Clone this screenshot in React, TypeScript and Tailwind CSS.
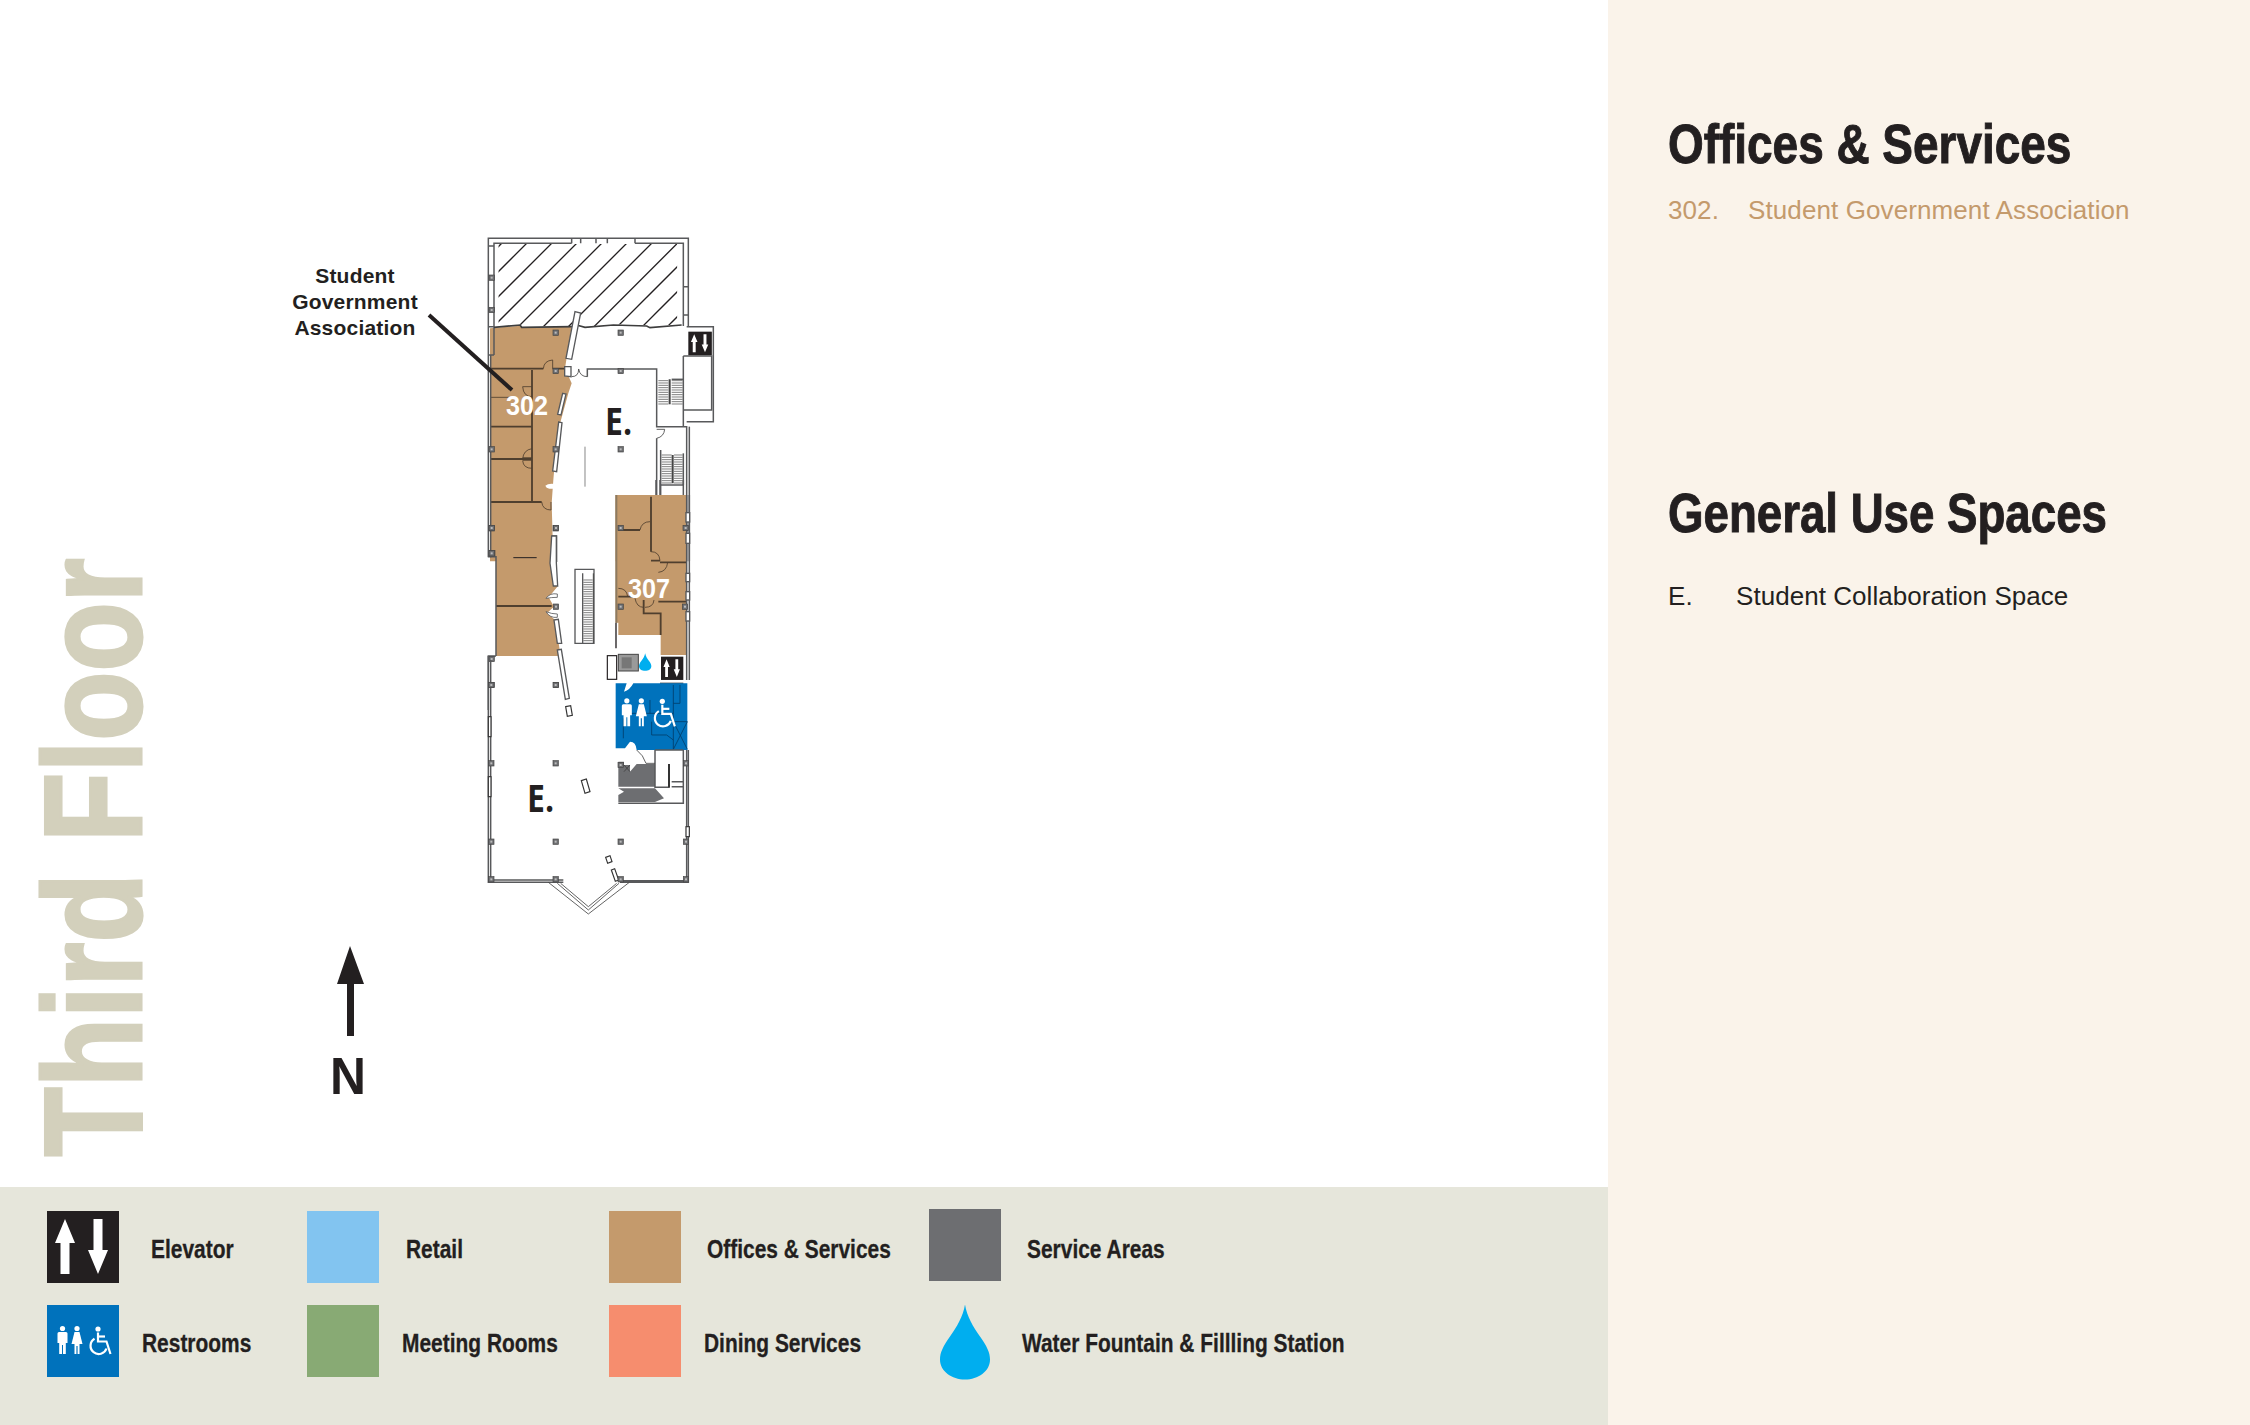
const wall = "#58595b";
const inner = "#4f3f2e";
const tan = "#c49a6c";

function ElevatorGlyph() {
  return (
    <g>
      <rect width="72" height="72" fill="#231f20" />
      <path d="M18 8 L28 32 H22.5 V63 H13.5 V32 H8 Z" fill="#fff" />
      <path d="M46.5 8 H55.5 V39 H61 L51 63 L41 39 H46.5 Z" fill="#fff" />
    </g>
  );
}

function RestroomGlyph() {
  return (
    <g fill="#fff">
      <circle cx="15.5" cy="23.5" r="2.6" />
      <path d="M12 27 H19 Q20.5 27 20.5 28.5 V38 H18.8 V49 H16 V40 H15 V49 H12.2 V38 H10.5 V28.5 Q10.5 27 12 27 Z" />
      <circle cx="30" cy="23.5" r="2.6" />
      <path d="M27.5 27 H32.5 L35.5 39 H32.5 V49 H30.6 V41 H29.4 V49 H27.5 V39 H24.5 Z" />
      <circle cx="51" cy="24" r="2.6" />
      <g fill="none" stroke="#fff" strokeWidth="2.2">
        <path d="M51 27.5 V36.5 H59.5 L63.5 49" />
        <path d="M51 31.5 H58" />
        <path d="M47.5 33.8 A8.2 8.2 0 1 0 59.5 43.5" />
      </g>
    </g>
  );
}

const DROP =
  "M25 0 C27 12 33 22 40 32 C47 42 50 48 50 55 C50 67 38 75 25 75 C12 75 0 67 0 55 C0 48 3 42 10 32 C17 22 23 12 25 0 Z";

function Columns({ at }: { at: number[][] }) {
  return (
    <g>
      {at.map(([x, y]) => (
        <g key={`${x}-${y}`}>
          <rect x={x - 8} y={y - 8} width="16" height="16" fill="#6d6e71" stroke="#444" strokeWidth="2" />
          <rect x={x - 3} y={y - 3} width="6" height="6" fill="#bbb" />
        </g>
      ))}
    </g>
  );
}

function Treads({ x1, x2, y1, y2 }: { x1: number; x2: number; y1: number; y2: number }) {
  const rows: number[] = [];
  for (let y = y1; y <= y2; y += 7) rows.push(y);
  return (
    <g stroke="#666" strokeWidth="2.5">
      {rows.map((y) => (
        <line key={y} x1={x1} x2={x2} y1={y} y2={y} />
      ))}
    </g>
  );
}

const hatch = [765, 840, 915, 990, 1065, 1140, 1215, 1292, 1362, 1437, 1512];

function FloorPlan() {
  return (
    <svg viewBox="280 230 480 890" className="block w-[480px] h-[890px] mt-[230px] shrink-0">
      {/* upper half, coordinates x3 from (270,220) */}
      <g transform="translate(270 220) scale(0.33333)">
        <clipPath id="hatch-area">
          <path d="M685 72 H1222 V313 L1140 320 L1130 316 L1030 313 L950 320 L920 313 L905 318 L755 320 L750 313 L685 320 Z" />
        </clipPath>
        <g clipPath="url(#hatch-area)" stroke="#231f20" strokeWidth="4">
          {hatch.map((c) => (
            <line key={c} x1={c - 60} y1="60" x2={c - 340} y2="340" />
          ))}
        </g>

        <path
          d="M660 325 L750 317 L755 323 L905 320 L885 445 L905 490 L895 520 L862 640 L850 780 L845 850 L850 1024 H660 Z"
          fill={tan}
        />
        <path d="M1037 825 H1248 V1024 H1037 Z" fill={tan} />

        {/* interior walls */}
        <g fill="none" stroke={inner} strokeWidth="5.5">
          <path d="M660 446 H820 M848 446 H885" />
          <path d="M786 450 V845 M660 620 H786 M660 717 H786 M660 846 H815" />
          <path d="M1143 825 V905 M1143 935 V1024 M1050 930 H1113" />
        </g>
        <g fill="none" stroke={inner} strokeWidth="2.5">
          <path d="M660 532 H722" />
          <path d="M820 446 Q822 422 848 420 V446" />
          <path d="M786 530 Q760 530 758 500 H786" />
          <path d="M786 686 Q760 690 758 717 M786 745 Q760 745 758 722" />
          <path d="M815 846 Q818 870 843 870 V846" />
          <path d="M1113 930 Q1118 905 1140 905" />
          <path d="M1143 995 Q1165 1000 1170 1024" />
        </g>
        <path d="M758 712 H786 V722 H758 Z" fill="#4f3f2e" />

        {/* shell */}
        <g fill="none" stroke={wall} strokeWidth="4.5">
          <path d="M655 1012 V55 H1255 V320" />
          <path d="M672 405 V70 H905 M1095 70 H1240 V318" />
          <path d="M662 1012 V405" />
          <path d="M905 70 V55 M932 70 V55 M978 70 V55 M1012 70 V55 M1095 70 V55" />
          <path d="M655 405 H672 M655 320 H672 M655 78 H672 M1240 200 H1255 M1240 285 H1255" />
        </g>
        <path d="M672 322 L750 315 L755 322 L905 320 L920 315 L945 322 L1030 315 L1130 318 L1140 323 L1235 315" fill="none" stroke="#3d3d3d" strokeWidth="5" />

        {/* slanted windows along the spine */}
        <g fill="#fff" stroke={wall} strokeWidth="4">
          <path d="M915 275 L932 279 L905 418 L888 415 Z" />
          <path d="M884 440 H903 V470 L884 468 Z" />
          <path d="M878 520 L888 522 L873 585 L863 583 Z" />
          <path d="M866 606 L876 608 L860 755 L848 753 Z" />
          <path d="M848 948 H860 V1024 H848 Z" />
        </g>
        <path d="M826 797 Q835 789 855 792 V806 H838 Q828 804 826 797 Z" fill="#fff" />

        {/* corridor and core */}
        <g fill="none" stroke={wall} strokeWidth="4.5">
          <path d="M952 470 V447 H1160 V620 H1250 V1024" />
          <path d="M1160 655 V825 M1172 690 V825" />
          <path d="M1250 320 H1330 V605 H1250" />
          <path d="M1240 408 H1325 V570 H1240 M1240 408 V620" />
          <path d="M1205 478 H1240" />
          <path d="M1258 620 V1024" />
          <path d="M1240 700 V795" />
          <path d="M1172 795 H1240" />
        </g>
        <path d="M945 680 V800" stroke="#888" strokeWidth="3" />
        <g fill="none" stroke="#444" strokeWidth="2.5">
          <path d="M905 470 Q926 470 926 447 Q930 470 952 470" />
          <path d="M1160 628 H1184 Q1182 650 1160 655" />
        </g>
        <Treads x1={1165} x2={1195} y1={482} y2={555} />
        <Treads x1={1205} x2={1238} y1={482} y2={555} />
        <Treads x1={1175} x2={1205} y1={705} y2={790} />
        <Treads x1={1212} x2={1238} y1={705} y2={790} />
        <path d="M1199 478 V553 M1208 705 V790" stroke="#444" strokeWidth="6" />

        <g transform="translate(1255 335) scale(0.98)">
          <ElevatorGlyph />
        </g>
        <Columns
          at={[
            [857, 338],
            [1052, 338],
            [857, 453],
            [1052, 453],
            [1052, 688],
            [857, 688],
            [665, 688],
            [665, 925],
            [857, 925],
            [1052, 925],
            [1245, 925],
            [665, 173],
            [665, 270],
            [667, 1000],
          ]}
        />
      </g>

      {/* middle, coordinates x3 from (470,480) */}
      <g transform="translate(470 480) scale(0.33333)">
        <path d="M78 230 H240 L262 320 L236 352 L252 380 L232 398 L255 420 L272 528 H78 Z" fill={tan} />
        <path d="M437 45 H648 V525 H572 V465 H445 V428 H437 Z" fill={tan} />
        <path d="M439 45 V428" stroke="#8d7a60" strokeWidth="6" />

        <g fill="none" stroke={inner} strokeWidth="5.5">
          <path d="M78 378 H245" />
          <path d="M445 150 H510 M543 50 V215 M543 242 H570 M570 247 H648 M565 365 H648" />
          <path d="M445 350 H495 M521 360 V400 H572 V465" />
        </g>
        <path d="M130 233 H200" stroke="#231f20" strokeWidth="3" />
        <g fill="none" stroke={inner} strokeWidth="2.5">
          <path d="M510 150 Q515 125 540 125" />
          <path d="M543 215 Q568 215 570 242" />
          <path d="M593 247 Q590 275 565 277" />
          <path d="M445 325 Q470 325 473 350" />
          <path d="M495 355 Q500 382 521 382 M525 382 Q550 382 552 360" />
        </g>

        {/* walls */}
        <g fill="none" stroke={wall} strokeWidth="4.5">
          <path d="M55 230 H78 V528" />
          <path d="M78 528 H55 V690" />
          <path d="M650 45 V600 M658 45 V600" />
          <path d="M558 0 V45 M570 0 V45 M640 0 V45" />
          <path d="M570 610 H640" />
        </g>
        <g fill="#fff" stroke={wall} strokeWidth="4">
          <rect x="648" y="98" width="11" height="28" />
          <rect x="648" y="160" width="11" height="30" />
          <rect x="648" y="280" width="11" height="25" />
          <rect x="648" y="335" width="11" height="25" />
          <rect x="648" y="395" width="11" height="28" />
          <path d="M245 168 H259 V248 L263 318 H250 L240 250 Z" />
          <path d="M252 420 L265 418 L275 490 L262 490 Z" />
          <path d="M262 510 L274 508 L298 655 L286 658 Z" />
        </g>
        <path d="M228 355 Q240 338 262 342 V352 Q245 352 228 355 Z M228 395 Q240 415 262 412 V402 Q245 402 228 395 Z" fill="#fff" stroke={wall} strokeWidth="2.5" />

        {/* open stair */}
        <path d="M315 268 H372 V490 H315 Z M338 280 V490" fill="#fff" stroke={wall} strokeWidth="4" />
        <Treads x1={340} x2={368} y1={300} y2={488} />
        <path d="M370 280 V490" stroke="#444" strokeWidth="3" />

        {/* drinking fountain nook */}
        <path d="M438 428 V505" stroke="#231f20" strokeWidth="4" />
        <rect x="412" y="527" width="28" height="71" fill="#fff" stroke="#231f20" strokeWidth="3.5" />
        <rect x="445" y="523" width="60" height="50" fill="#9a9a9a" stroke="#444" strokeWidth="3" />
        <rect x="455" y="532" width="30" height="33" fill="#777" />
        <g transform="translate(507 520) scale(0.74 0.7)">
          <path d={DROP} fill="#00aeef" />
        </g>
        <g transform="translate(573 530) scale(0.93 0.97)">
          <ElevatorGlyph />
        </g>
        <Columns
          at={[
            [65, 144],
            [258, 144],
            [452, 144],
            [647, 144],
            [65, 220],
            [258, 380],
            [452, 380],
            [645, 380],
            [65, 537],
            [65, 615],
            [258, 615],
          ]}
        />
      </g>

      {/* lower half, coordinates x3 from (470,650) */}
      <g transform="translate(470 650) scale(0.33333)">
        <path d="M437 100 H470 L462 125 Q480 120 490 100 H652 V300 H500 Q498 275 480 275 L465 295 H437 Z" fill="#0072bc" />
        <g fill="none" stroke="#003f6b" strokeWidth="2.5">
          <path d="M610 105 V298 M610 215 L652 298 M652 215 L610 298 M610 215 H652" />
          <path d="M630 105 V160 H610 M540 150 V190 H610 M460 190 H540 M460 205 V265" />
          <path d="M545 215 V255 H590 L610 270" />
        </g>
        <g transform="translate(424 82) scale(3)">
          <RestroomGlyph />
        </g>

        <path d="M445 335 H462 V345 H480 V365 L500 342 H555 V410 H445 Z" fill="#6d6e71" />
        <path d="M445 415 H555 L582 445 L555 456 H445 V435 L462 425 Z" fill="#6d6e71" />
        <g fill="none" stroke={wall} strokeWidth="4.5">
          <path d="M555 300 V412 H597 V342 M555 300 H640 M640 300 V462 M445 460 H640" />
          <path d="M605 395 H640 M605 410 H640" />
          <path d="M55 18 V697 H280 M62 30 V690 M450 697 H655 V300 M450 692 H648 M62 690 H280" />
          <path d="M650 300 V697" />
        </g>
        <path d="M500 300 Q520 315 528 340 H555" fill="none" stroke="#444" strokeWidth="2.5" />
        <path d="M597 342 V412" stroke="#333" strokeWidth="6" />
        <path d="M462 345 L480 365 M480 345 L462 365" stroke="#333" strokeWidth="2" />
        <g fill="none" stroke="#444" strokeWidth="2.5">
          <path d="M235 697 L355 792 L478 697" />
          <path d="M262 700 L355 780 L447 700" />
          <path d="M272 700 L355 770 L440 700" />
        </g>
        <g fill="#fff" stroke="#333" strokeWidth="3.5">
          <path d="M334 392 L349 387 L360 425 L345 430 Z" />
          <path d="M287 170 L302 167 L307 196 L292 199 Z" />
          <path d="M407 622 L420 617 L426 635 L413 640 Z" />
          <path d="M424 660 L434 656 L446 690 L436 694 Z" />
          <rect x="55" y="380" width="8" height="60" />
          <rect x="55" y="200" width="8" height="60" />
          <rect x="648" y="530" width="10" height="30" />
        </g>
        <Columns
          at={[
            [64, 105],
            [257, 105],
            [64, 340],
            [257, 340],
            [64, 575],
            [257, 575],
            [452, 575],
            [648, 575],
            [64, 688],
            [257, 688],
            [452, 688],
            [648, 688],
            [648, 340],
            [452, 345],
          ]}
        />
      </g>

      {/* callout and room labels */}
      <path d="M429 315 L512 390" stroke="#231f20" strokeWidth="4" />
      <g fill="#231f20" fontWeight="700" fontSize="21" letterSpacing="0.2" textAnchor="middle">
        <text x="355" y="283">Student</text>
        <text x="355" y="309">Government</text>
        <text x="355" y="335">Association</text>
      </g>
      <g fill="#fff" fontWeight="700" fontSize="28">
        <text x="506" y="415" textLength="42" lengthAdjust="spacingAndGlyphs">302</text>
        <text x="628" y="598" textLength="42" lengthAdjust="spacingAndGlyphs">307</text>
      </g>
      <g fill="#231f20" fontWeight="700" fontSize="38" className="font-['Open_Sans',sans-serif]">
        <text x="605" y="435" textLength="27" lengthAdjust="spacingAndGlyphs">E.</text>
        <text x="527" y="812" textLength="27" lengthAdjust="spacingAndGlyphs">E.</text>
      </g>

      {/* north arrow */}
      <path d="M350 946 L364 984 H354 V1036 H347 V984 H337 Z" fill="#231f20" />
      <text x="330" y="1094" fill="#231f20" fontWeight="700" fontSize="52" textLength="36" lengthAdjust="spacingAndGlyphs" className="font-['Liberation_Sans',sans-serif]">
        N
      </text>
    </svg>
  );
}

function LegendLabel({ children, gap }: { children: string; gap: string }) {
  return (
    <span className={`${gap} pt-1 whitespace-nowrap inline-block origin-left scale-x-[0.805] text-[26px] leading-8 font-bold text-[#231f20] [-webkit-text-stroke:0.3px_#231f20]`}>
      {children}
    </span>
  );
}

function Swatch({ color }: { color: string }) {
  return <div className={`${color} w-[72px] h-[72px] shrink-0`} />;
}

function Legend() {
  return (
    <footer className="h-[238px] bg-[#e6e6db] pl-[47px] pt-6">
      <div className="grid grid-cols-[260px_302px_320px_1fr] grid-rows-[72px_72px] gap-y-[22px]">
        <div className="flex items-center">
          <svg viewBox="0 0 72 72" className="w-[72px] h-[72px] shrink-0">
            <ElevatorGlyph />
          </svg>
          <LegendLabel gap="ml-[32px]">Elevator</LegendLabel>
        </div>
        <div className="flex items-center">
          <Swatch color="bg-[#82c4f0]" />
          <LegendLabel gap="ml-[27px]">Retail</LegendLabel>
        </div>
        <div className="flex items-center">
          <Swatch color="bg-[#c49a6c]" />
          <LegendLabel gap="ml-[26px]">Offices &amp; Services</LegendLabel>
        </div>
        <div className="flex items-center">
          <div className="w-[72px] h-[72px] shrink-0 bg-[#6d6e71] -translate-y-0.5" />
          <LegendLabel gap="ml-[26px]">Service Areas</LegendLabel>
        </div>

        <div className="flex items-center">
          <svg viewBox="0 0 72 72" className="w-[72px] h-[72px] shrink-0 bg-[#0072bc]">
            <RestroomGlyph />
          </svg>
          <LegendLabel gap="ml-[23px]">Restrooms</LegendLabel>
        </div>
        <div className="flex items-center">
          <Swatch color="bg-[#88aa74]" />
          <LegendLabel gap="ml-[23px]">Meeting Rooms</LegendLabel>
        </div>
        <div className="flex items-center">
          <Swatch color="bg-[#f68d6e]" />
          <LegendLabel gap="ml-[23px]">Dining Services</LegendLabel>
        </div>
        <div className="flex items-center">
          <div className="w-[72px] h-[72px] shrink-0 flex justify-center items-start">
            <svg viewBox="0 0 50 75" className="w-[50px] h-[78px] -mt-[2px] shrink-0">
              <path d={DROP} fill="#00aeef" />
            </svg>
          </div>
          <LegendLabel gap="ml-[21px]">Water Fountain &amp; Fillling Station</LegendLabel>
        </div>
      </div>
    </footer>
  );
}

function Directory() {
  return (
    <aside className="w-[642px] min-h-[1425px] bg-[#faf3ea] pl-[60px] pt-[116px] text-[#231f20]">
      <h2 className="text-[56px] leading-[56px] font-bold whitespace-nowrap origin-left scale-x-[0.82] [-webkit-text-stroke:1px_#231f20]">Offices &amp; Services</h2>
      <div className="flex mt-[22px] text-[26px] leading-8 tracking-[0.1px] text-[#c49a6c]">
        <span className="w-[80px]">302.</span>
        <span>Student Government Association</span>
      </div>
      <h2 className="mt-[259px] text-[56px] leading-[56px] font-bold whitespace-nowrap origin-left scale-x-[0.815] [-webkit-text-stroke:1px_#231f20]">General Use Spaces</h2>
      <div className="flex mt-[39px] text-[26px] leading-8 tracking-[0.05px]">
        <span className="w-[68px]">E.</span>
        <span>Student Collaboration Space</span>
      </div>
    </aside>
  );
}

export default function App() {
  return (
    <div className="flex w-[2250px] h-[1425px] overflow-hidden bg-white font-['Liberation_Sans',Arial,sans-serif]">
      <main className="w-[1608px] shrink-0 flex flex-col">
        <div className="h-[1187px] flex">
          <div className="w-[280px] shrink-0 pl-[23px] pt-[488px]">
            <div className="[writing-mode:vertical-rl] rotate-180 scale-y-[0.81] text-[140px] leading-[140px] font-bold text-[#d3d0bc] [-webkit-text-stroke:3px_#d3d0bc] whitespace-nowrap">
              Third Floor
            </div>
          </div>
          <FloorPlan />
        </div>
        <Legend />
      </main>
      <Directory />
    </div>
  );
}
